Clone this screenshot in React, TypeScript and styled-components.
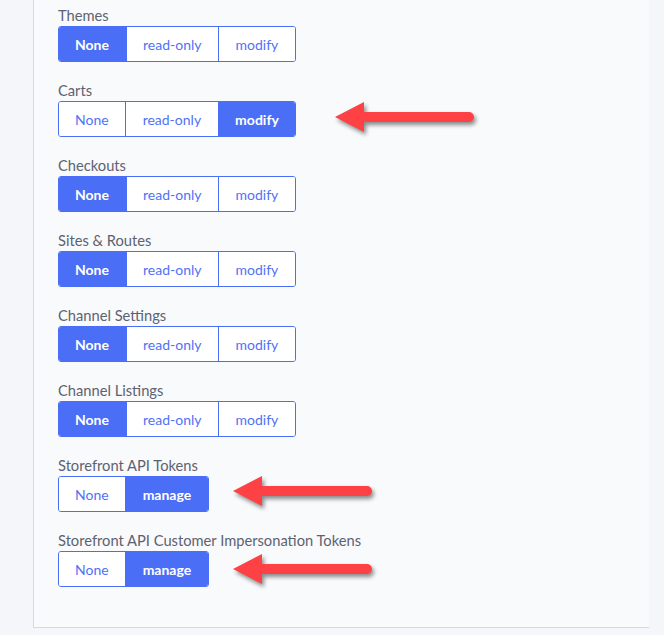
import React from 'react';
import styled, { createGlobalStyle } from 'styled-components';

const GlobalStyle = createGlobalStyle`
  html, body {
    margin: 0;
    padding: 0;
    background: #f4f6f9;
  }
  body {
    font-family: Lato, "Open Sans", "Liberation Sans", sans-serif;
  }
`;

const Page = styled.div`
  width: 664px;
  height: 635px;
  overflow: hidden;
`;

const Panel = styled.div`
  margin-left: 33px;
  width: 616px;
  background: #f9fafb;
  border-left: 1px solid #d5d9e4;
  border-bottom: 1px solid #d5d9e4;
  padding: 5px 0 40px 24px;
  box-sizing: border-box;
  display: flex;
  flex-direction: column;
  gap: 18px;
`;

const Field = styled.div`
  display: flex;
  flex-direction: column;
  gap: 1px;
`;

const Label = styled.div`
  font-size: 14.7px;
  line-height: 20px;
  color: #5d6272;
`;

const Row = styled.div`
  position: relative;
  height: 36px;
`;

const Group = styled.div`
  display: inline-flex;
  height: 36px;
  border: 1px solid #4b6ef6;
  border-radius: 3px;
  overflow: hidden;
  box-sizing: border-box;
`;

const Option = styled.button<{ $active?: boolean }>`
  font-family: inherit;
  font-size: 14px;
  height: 34px;
  padding: 0 16.5px;
  margin: 0;
  border: none;
  border-left: 1px solid #4b6ef6;
  background: ${(p) => (p.$active ? '#4b6ef6' : '#ffffff')};
  color: ${(p) => (p.$active ? '#ffffff' : '#4f72f6')};
  font-weight: ${(p) => (p.$active ? 700 : 400)};
  cursor: pointer;

  &:first-child {
    border-left: none;
    padding-left: 16px;
  }
`;

const ArrowWrap = styled.div<{ $left: number; $top: number }>`
  position: absolute;
  left: ${(p) => p.$left}px;
  top: ${(p) => p.$top}px;
  width: 145px;
  height: 36px;
  filter: drop-shadow(2px 3px 2px rgba(0, 0, 0, 0.45));
`;

const Arrow = ({ left, top }: { left: number; top: number }) => (
  <ArrowWrap $left={left} $top={top}>
    <svg width="145" height="32" viewBox="0 0 145 32">
      <path d="M0 15 L29 0 L29 10 L134 10 A5 5 0 0 1 134 20 L29 20 L29 30 Z" fill="#fe4144" />
    </svg>
  </ArrowWrap>
);

type Perm = {
  label: string;
  options: string[];
  active: number;
  arrow?: { left: number; top: number };
};

const perms: Perm[] = [
  { label: 'Themes', options: ['None', 'read-only', 'modify'], active: 0 },
  { label: 'Carts', options: ['None', 'read-only', 'modify'], active: 2, arrow: { left: 277, top: 1 } },
  { label: 'Checkouts', options: ['None', 'read-only', 'modify'], active: 0 },
  { label: 'Sites & Routes', options: ['None', 'read-only', 'modify'], active: 0 },
  { label: 'Channel Settings', options: ['None', 'read-only', 'modify'], active: 0 },
  { label: 'Channel Listings', options: ['None', 'read-only', 'modify'], active: 0 },
  { label: 'Storefront API Tokens', options: ['None', 'manage'], active: 1, arrow: { left: 175, top: 0 } },
  {
    label: 'Storefront API Customer Impersonation Tokens',
    options: ['None', 'manage'],
    active: 1,
    arrow: { left: 175, top: 3 },
  },
];

export default function App() {
  return (
    <Page>
      <GlobalStyle />
      <Panel>
        {perms.map((perm) => (
          <Field key={perm.label}>
            <Label>{perm.label}</Label>
            <Row>
              <Group>
                {perm.options.map((opt, i) => (
                  <Option key={opt} $active={i === perm.active}>
                    {opt}
                  </Option>
                ))}
              </Group>
              {perm.arrow && <Arrow left={perm.arrow.left} top={perm.arrow.top} />}
            </Row>
          </Field>
        ))}
      </Panel>
    </Page>
  );
}
